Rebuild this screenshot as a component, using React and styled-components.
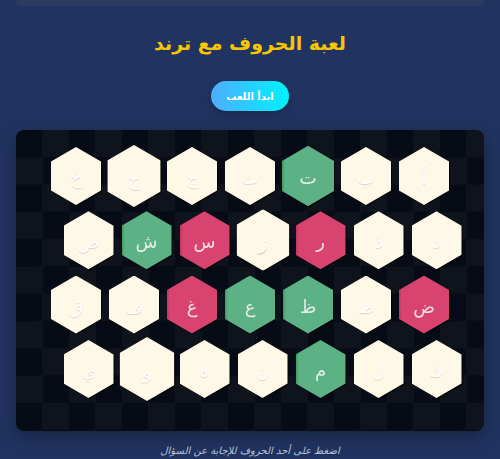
import React from 'react'
import styled, { createGlobalStyle } from 'styled-components'

const GlobalStyle = createGlobalStyle`
  html, body {
    margin: 0;
    padding: 0;
    background: #213461;
  }
  body {
    font-family: "DejaVu Sans", "Noto Sans", sans-serif;
    overflow: hidden;
  }
`

const Page = styled.div`
  width: 500px;
  height: 459px;
  display: flex;
  flex-direction: column;
  align-items: center;
  background: #213461;
`

const TopCard = styled.div`
  align-self: stretch;
  height: 6px;
  margin: 0 15px;
  background: #2c3b62;
  border-radius: 0 0 9px 9px;
`

const Title = styled.h1`
  margin: 22px 0 0;
  font-size: 19px;
  line-height: 30px;
  font-weight: 700;
  color: #f7c600;
  direction: rtl;
`

const PlayButton = styled.button`
  margin-top: 23px;
  width: 78px;
  height: 30px;
  border: none;
  border-radius: 15px;
  background: linear-gradient(90deg, #4facfe 0%, #00f2fe 100%);
  color: #ffffff;
  font-family: inherit;
  font-size: 10px;
  font-weight: 700;
  direction: rtl;
  box-shadow: 0 3px 8px rgba(0, 0, 0, 0.25);
`

const Board = styled.div`
  box-sizing: border-box;
  margin-top: 19px;
  width: 468px;
  height: 301px;
  padding: 17px 0 0;
  border-radius: 8px;
  display: flex;
  flex-direction: column;
  gap: 6.3px;
  background-color: #060b15;
  background-image: repeating-conic-gradient(#0f131c 0 25%, #060b15 0 50%);
  background-size: 53px 54.6px;
  box-shadow: 0 6px 18px rgba(0, 0, 0, 0.35);
`

const Row = styled.div`
  display: flex;
  direction: rtl;
  justify-content: center;
  gap: 8px;
  padding-left: ${p => (p.$shift ? '25px' : '0')};
`

const palette = {
  cream: { bg: '#fef8e6', edge: '#fef8e6', text: '#ffffff' },
  green: { bg: '#5cb284', edge: '#3c9b62', text: '#e4ece6' },
  pink: { bg: '#d9436f', edge: '#c2365f', text: '#eedfe4' },
}

const HexWrap = styled.div`
  width: 50px;
  height: 58px;
  flex: 0 0 auto;
  transform: scale(${p => p.$scale || 1});
  filter: drop-shadow(1.5px 1.5px 0.5px rgba(0, 0, 0, 0.75));
`

const Hex = styled.div`
  width: 100%;
  height: 100%;
  clip-path: polygon(50% 0, 100% 25%, 100% 75%, 50% 100%, 0 75%, 0 25%);
  background: linear-gradient(
    90deg,
    ${p => palette[p.$tone].edge} 0,
    ${p => palette[p.$tone].bg} 3px
  );
  display: flex;
  align-items: center;
  justify-content: center;
  color: ${p => palette[p.$tone].text};
  font-size: 18px;
  font-weight: 400;
  text-shadow: ${p => (p.$tone === 'cream' ? '0 1px 1px rgba(0,0,0,0.15)' : 'none')};
  padding-top: 3px;
  box-sizing: border-box;
`

const Hint = styled.p`
  margin: 14px 0 0;
  font-size: 10px;
  font-style: italic;
  color: #b9c2d6;
  direction: rtl;
`

const rows = [
  [['أ'], ['ب'], ['ت', 'green', 1.04], ['ث'], ['ج'], ['ح', 'cream', 1.07], ['خ']],
  [['د'], ['ذ'], ['ر', 'pink'], ['ز', 'cream', 1.06], ['س', 'pink'], ['ش', 'green'], ['ص']],
  [['ض', 'pink'], ['ط'], ['ظ', 'green'], ['ع', 'green'], ['غ', 'pink'], ['ف'], ['ق']],
  [['ك'], ['ل'], ['م', 'green'], ['ن'], ['ه'], ['و', 'cream', 1.1], ['ي']],
]

export default function App() {
  return (
    <Page>
      <GlobalStyle />
      <TopCard />
      <Title>لعبة الحروف مع ترند</Title>
      <PlayButton>ابدأ اللعب</PlayButton>
      <Board>
        {rows.map((row, i) => (
          <Row key={i} $shift={i % 2 === 1}>
            {row.map(([letter, tone = 'cream', scale]) => (
              <HexWrap key={letter} $scale={scale}>
                <Hex $tone={tone}>{letter}</Hex>
              </HexWrap>
            ))}
          </Row>
        ))}
      </Board>
      <Hint>اضغط على أحد الحروف للإجابة عن السؤال</Hint>
    </Page>
  )
}
